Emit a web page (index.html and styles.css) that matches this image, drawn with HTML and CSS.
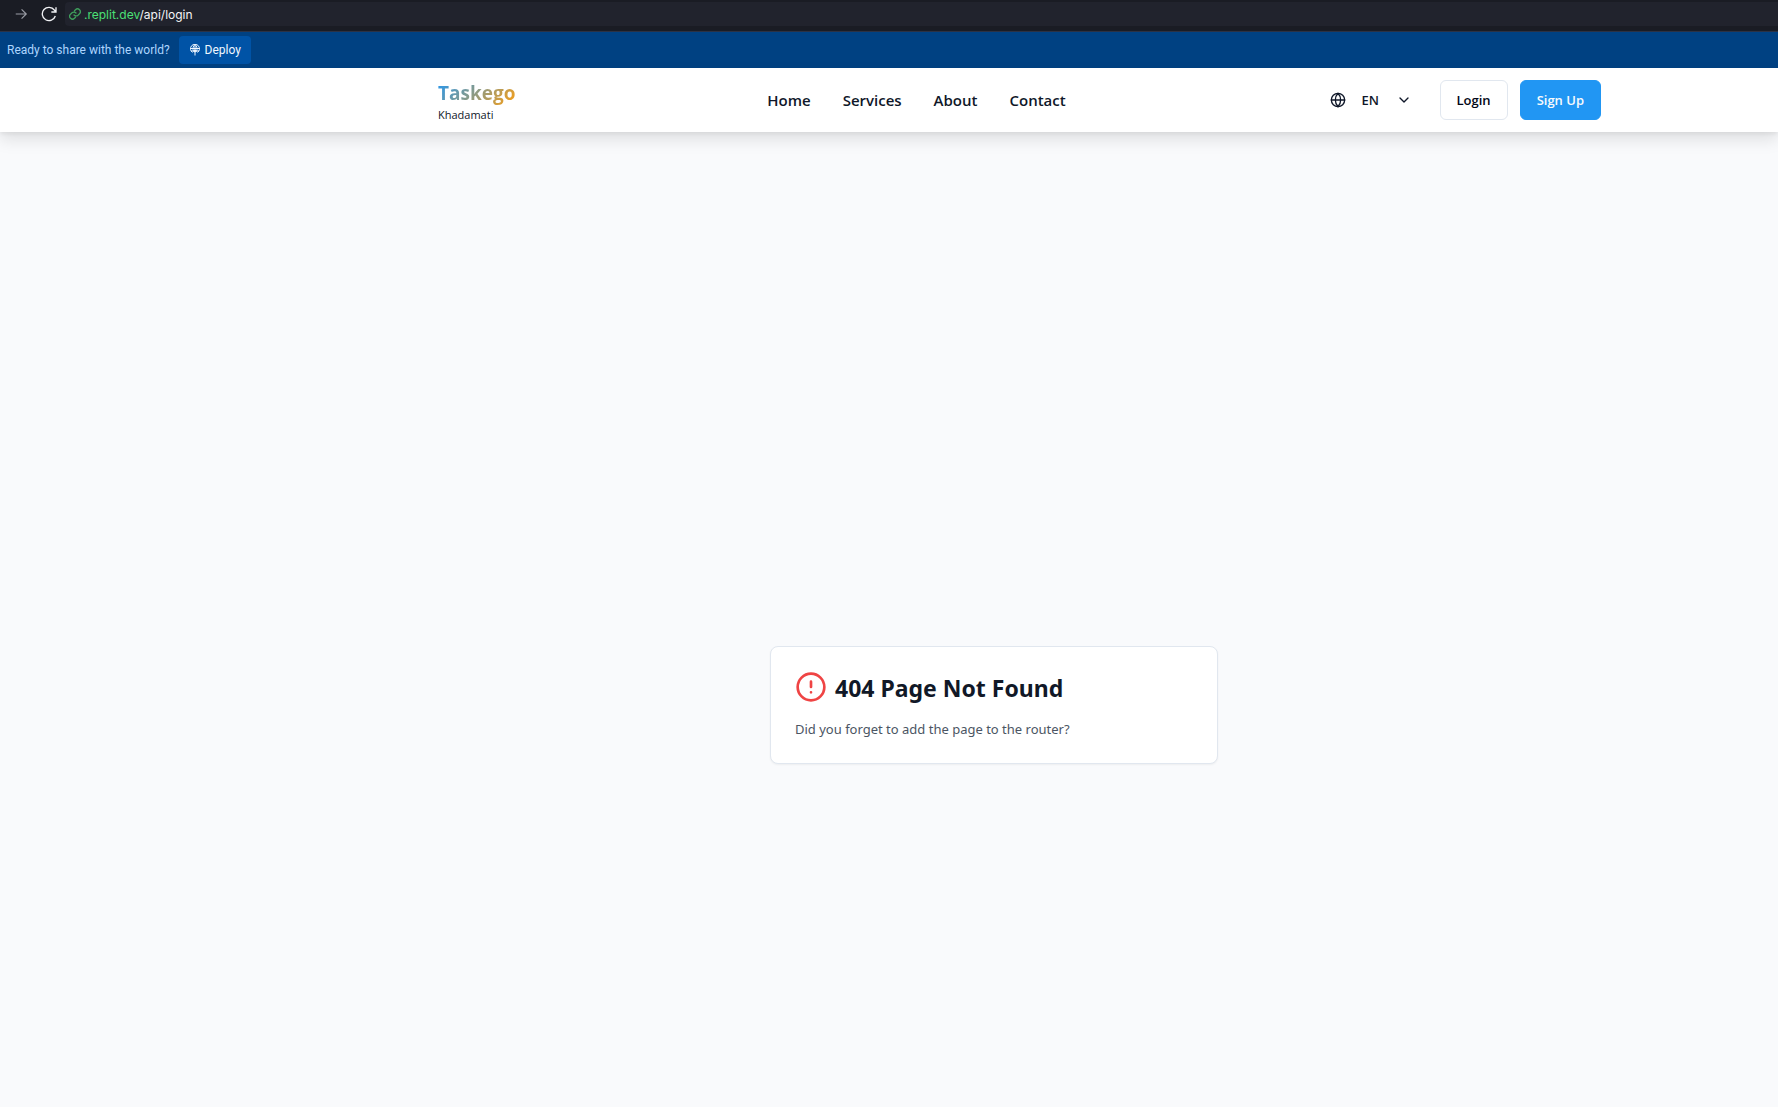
FILE: index.html
```
<!DOCTYPE html>
<html lang="en">
<head>
<meta charset="utf-8">
<title>Taskego</title>
<link rel="stylesheet" href="styles.css">
</head>
<body>
<div class="toolbar">
  <button class="tool" type="button" aria-label="Forward">
    <svg width="14" height="14" viewBox="0 0 24 24" fill="none" stroke="currentColor" stroke-width="2"><path d="M3 12h18M13 4l8 8-8 8"/></svg>
  </button>
  <button class="tool tool-reload" type="button" aria-label="Reload">
    <svg width="16" height="16" viewBox="0 0 24 24" fill="none" stroke="currentColor" stroke-width="2"><path d="M21.500 15A10 10 0 1 1 20 6l2.500 2.500M22.500 2v7h-7"/></svg>
  </button>
  <a class="address" href="#">
    <svg class="link-icon" width="12" height="12" viewBox="0 0 24 24" fill="none" stroke="currentColor" stroke-width="2.500" stroke-linecap="round"><path d="M10 14a5.500 5.500 0 0 0 8 .5l3-3a5.500 5.500 0 0 0-8-8l-2 2M14 10a5.500 5.500 0 0 0-8-.5l-3 3a5.500 5.500 0 0 0 8 8l2-2"/></svg>
    <span><span class="host">.replit.dev</span>/api/login</span>
  </a>
</div>
<div class="banner">
  <span>Ready to share with the world?</span>
  <button class="deploy" type="button">
    <svg width="12" height="12" viewBox="0 0 24 24" fill="none" stroke="currentColor" stroke-width="2"><path d="M7 17a9 9 0 1 1 10 0M3 9h18M9 15C7 10 8 4 12 1c4 3 5 9 3 14M4 14h16M12 1v22"/><circle cx="12" cy="14" r="2" fill="currentColor"/></svg>
    Deploy
  </button>
</div>
<header class="header">
  <a class="brand" href="#">
    <span class="brand-name">Taskego</span>
    <span class="brand-sub">Khadamati</span>
  </a>
  <nav class="nav">
    <a href="#">Home</a>
    <a href="#">Services</a>
    <a href="#">About</a>
    <a href="#">Contact</a>
  </nav>
  <div class="actions">
    <div class="language">
      <svg class="globe" width="16" height="16" viewBox="0 0 24 24" fill="none" stroke="currentColor" stroke-width="2" stroke-linecap="round"><circle cx="12" cy="12" r="10"/><path d="M12 2a14.500 14.500 0 0 0 0 20 14.500 14.500 0 0 0 0-20M2 12h20"/></svg>
      <select aria-label="Language"><option>EN</option></select>
      <svg class="chevron" width="16" height="16" viewBox="0 0 24 24" fill="none" stroke="currentColor" stroke-width="2" stroke-linecap="round" stroke-linejoin="round"><path d="m6 9 6 6 6-6"/></svg>
    </div>
    <button class="btn btn-outline" type="button">Login</button>
    <button class="btn btn-primary" type="button">Sign Up</button>
  </div>
</header>
<main class="main">
  <section class="card">
    <div class="card-title">
      <svg width="32" height="32" viewBox="0 0 24 24" fill="none" stroke="currentColor" stroke-width="2" stroke-linecap="round"><circle cx="12" cy="12" r="10"/><path d="M12 8v4M12 16h.01"/></svg>
      <h1>404 Page Not Found</h1>
    </div>
    <p>Did you forget to add the page to the router?</p>
  </section>
</main>
</body>
</html>
```
FILE: styles.css
```
* {
  box-sizing: border-box;
}

body {
  margin: 0;
  min-height: 100vh;
  display: flex;
  flex-direction: column;
  background: #f9fafc;
  color: #0f1729;
  font-family: "Open Sans", "Noto Sans", sans-serif;
}

a {
  color: inherit;
  text-decoration: none;
}

button,
select {
  font: inherit;
}

svg {
  display: block;
  flex: none;
}

.toolbar {
  height: 32px;
  display: flex;
  align-items: flex-start;
  padding: 2px 0 0 9px;
  background: #1a1c24;
  border-bottom: 1px solid #2b3245;
}

.tool {
  width: 24px;
  height: 24px;
  display: grid;
  place-items: center;
  padding: 0;
  border: 0;
  background: none;
  color: #9a9ca5;
}

.tool-reload {
  width: 32px;
  color: #f0f1f4;
}

.address {
  flex: 1;
  height: 24px;
  display: flex;
  align-items: center;
  gap: 3px;
  padding: 0 4px;
  border-radius: 4px 0 0 4px;
  background: #21232d;
  color: #f5f5f7;
  font-family: "Inter", sans-serif;
  font-size: 12px;
}

.link-icon {
  color: #3f9f5c;
}

.host {
  color: #4be076;
}

.banner {
  height: 36px;
  display: flex;
  align-items: center;
  gap: 9px;
  padding: 0 7px;
  background: #004182;
  color: #aed6ff;
  font-family: Roboto, sans-serif;
  font-size: 12px;
}

.deploy {
  height: 28px;
  display: flex;
  align-items: center;
  gap: 4px;
  padding: 0 10px;
  border: 0;
  border-radius: 4px;
  background: #0053a6;
  color: #f0f7ff;
}

.header {
  height: 64px;
  display: flex;
  align-items: center;
  justify-content: space-between;
  padding: 0 177px 0 438px;
  background: #fff;
  box-shadow: 0 8px 15px rgba(0, 0, 0, 0.1), 0 2px 4px rgba(0, 0, 0, 0.06);
}

.brand {
  display: flex;
  flex-direction: column;
  align-items: flex-start;
  padding-top: 2px;
}

.brand-name {
  font-size: 19px;
  font-weight: 700;
  line-height: 28px;
  background: linear-gradient(135deg, #2196f3, #ff9f0f);
  background-clip: text;
  color: transparent;
}

.brand-sub {
  font-size: 11px;
  line-height: 16px;
}

.nav {
  display: flex;
  gap: 32px;
  font-size: 15px;
  font-weight: 600;
  line-height: 24px;
}

.actions {
  display: flex;
  gap: 12px;
  font-size: 13px;
  font-weight: 600;
}

.language {
  position: relative;
  margin-right: 4px;
}

.language select {
  width: 106px;
  height: 40px;
  padding: 0 40px 0 44px;
  border: 0;
  appearance: none;
  background: none;
  color: inherit;
}

.globe,
.chevron {
  position: absolute;
  top: 12px;
  pointer-events: none;
}

.globe {
  left: 12px;
}

.chevron {
  right: 12px;
}

.btn {
  height: 40px;
  padding: 0 16px;
  border: 1px solid #e1e7ef;
  border-radius: 6px;
  background: #fff;
  color: #020817;
  font-weight: 600;
}

.btn-primary {
  border-color: #2196f3;
  background: #2196f3;
  color: #f8fafc;
}

.main {
  flex: 1;
  display: flex;
  align-items: center;
  justify-content: center;
  padding: 171px 0 0 210px;
}

.card {
  width: 448px;
  padding: 24px;
  border: 1px solid #e1e7ef;
  border-radius: 8px;
  background: #fff;
  box-shadow: 0 1px 2px rgba(0, 0, 0, 0.05);
  font-family: "Noto Sans", sans-serif;
}

.card-title {
  display: flex;
  gap: 8px;
  color: #ef4444;
}

.card h1 {
  margin: 0;
  color: #111827;
  font-size: 23px;
  font-weight: 700;
  line-height: 34px;
}

.card p {
  margin: 14px 0 0;
  color: #4b5563;
  font-size: 13px;
  line-height: 20px;
}
```
